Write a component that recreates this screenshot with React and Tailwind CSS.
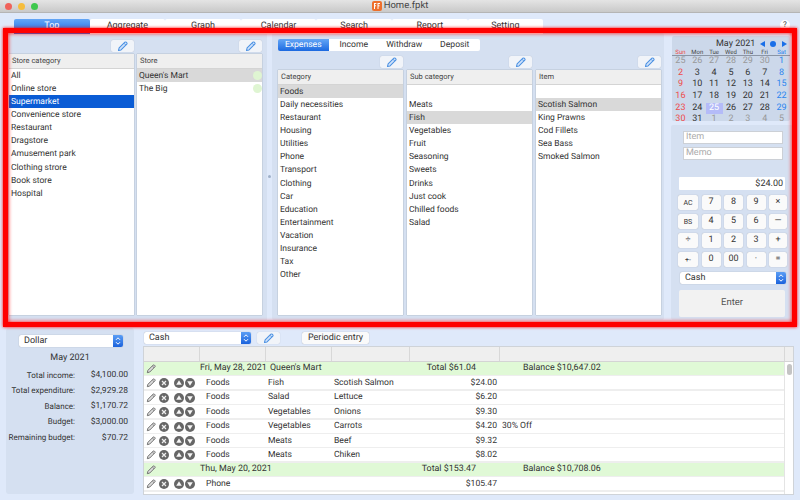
import React from "react";

const FONT = { fontFamily: 'Roboto, "Liberation Sans", Arial, sans-serif' };

const tabs = ["Top", "Aggregate", "Graph", "Calendar", "Search", "Report", "Setting"];
const storeCats = ["All", "Online store", "Supermarket", "Convenience store", "Restaurant", "Dragstore", "Amusement park", "Clothing strore", "Book store", "Hospital"];
const categories = ["Foods", "Daily necessities", "Restaurant", "Housing", "Utilities", "Phone", "Transport", "Clothing", "Car", "Education", "Entertainment", "Vacation", "Insurance", "Tax", "Other"];
const subCats = ["", "Meats", "Fish", "Vegetables", "Fruit", "Seasoning", "Sweets", "Drinks", "Just cook", "Chilled foods", "Salad"];
const items = ["", "Scotish Salmon", "King Prawns", "Cod Fillets", "Sea Bass", "Smoked Salmon"];

const calDays = [
  [25, 26, 27, 28, 29, 30, 1],
  [2, 3, 4, 5, 6, 7, 8],
  [9, 10, 11, 12, 13, 14, 15],
  [16, 17, 18, 19, 20, 21, 22],
  [23, 24, 25, 26, 27, 28, 29],
  [30, 31, 1, 2, 3, 4, 5],
];

const keys = [
  ["AC", "7", "8", "9", "×"],
  ["BS", "4", "5", "6", "—"],
  ["÷", "1", "2", "3", "+"],
  ["+-", "0", "00", "·", "="],
];

const summary = [
  ["Total income:", "$4,100.00"],
  ["Total expenditure:", "$2,929.28"],
  ["Balance:", "$1,170.72"],
  ["Budget:", "$3,000.00"],
  ["Remaining budget:", "$70.72"],
];

const entries = [
  { group: true, date: "Fri, May 28, 2021", store: "Queen's Mart", total: "Total $61.04", balance: "Balance $10,647.02" },
  { cat: "Foods", sub: "Fish", item: "Scotish Salmon", price: "$24.00" },
  { cat: "Foods", sub: "Salad", item: "Lettuce", price: "$6.20" },
  { cat: "Foods", sub: "Vegetables", item: "Onions", price: "$9.30" },
  { cat: "Foods", sub: "Vegetables", item: "Carrots", price: "$4.20", memo: "30% Off" },
  { cat: "Foods", sub: "Meats", item: "Beef", price: "$9.32" },
  { cat: "Foods", sub: "Meats", item: "Chiken", price: "$8.02" },
  { group: true, date: "Thu, May 20, 2021", store: "", total: "Total $153.47", balance: "Balance $10,708.06" },
  { cat: "Phone", sub: "", item: "", price: "$105.47" },
  { cat: "", sub: "", item: "", price: "" },
];

function PencilIcon({ color = "#4a90e2", fill = "#cfe2fb", size = 11 }) {
  return (
    <svg width={size} height={size} viewBox="0 0 12 12">
      <path d="M1.6 10.4 L2.3 7.6 L8.6 1.3 Q9.3 0.7 10 1.3 L10.7 2 Q11.3 2.7 10.7 3.4 L4.4 9.7 Z" fill={fill} stroke={color} strokeWidth="1.1" strokeLinejoin="round" />
      <path d="M7.6 2.4 L9.6 4.4" stroke={color} strokeWidth="0.9" />
    </svg>
  );
}

function PencilButton() {
  return (
    <div className="w-[23px] h-[12px] bg-[#f1f4f9] rounded-[2px] flex items-center justify-center shadow-[0_0_1px_rgba(0,0,0,0.2)]">
      <PencilIcon />
    </div>
  );
}

function RemoveIcon() {
  return (
    <svg width="10" height="10" viewBox="0 0 10 10">
      <circle cx="5" cy="5" r="5" fill="#666" />
      <path d="M3 3 L7 7 M7 3 L3 7" stroke="#eee" strokeWidth="1.2" />
    </svg>
  );
}

function MoveIcon({ down }) {
  return (
    <svg width="10" height="10" viewBox="0 0 10 10">
      <circle cx="5" cy="5" r="5" fill="#666" />
      <path d={down ? "M2.2 3.2 H7.8 L5 7.8 Z" : "M5 2.2 L7.8 6.8 H2.2 Z"} fill="#f6f6f6" />
    </svg>
  );
}

function Select({ label, className }) {
  return (
    <div className={"h-[12px] bg-white rounded-[2px] flex items-center justify-between pl-[5px] shadow-[0_0_1px_rgba(0,0,0,0.35)] text-[9px] text-[#333] " + className}>
      <span className="pt-[1px]">{label}</span>
      <div className="w-[10px] h-full rounded-r-[2px] bg-gradient-to-b from-[#5a9df5] to-[#1a62dc] flex items-center justify-center">
        <svg width="6" height="10" viewBox="0 0 6 10">
          <path d="M1 3.8 L3 1.8 L5 3.8 M1 6.2 L3 8.2 L5 6.2" fill="none" stroke="#fff" strokeWidth="1" />
        </svg>
      </div>
    </div>
  );
}

function ListColumn({ title, rows, selected, activeRow, dots, className }) {
  return (
    <div className={"w-[125px] bg-white flex flex-col overflow-hidden shadow-[0_0_1px_rgba(0,0,0,0.4)] " + className}>
      <div className="h-[15px] shrink-0 bg-[#efefef] border-b border-[#d4d4d4] px-[3px] flex items-center text-[7.5px] text-[#444]">
        {title}
      </div>
      {rows.map((row, index) => (
        <div
          key={index}
          className={
            "h-[13.14px] shrink-0 pl-[2px] flex items-center justify-between text-[8.5px] " +
            (index === activeRow ? "bg-[#0a5cd5] text-white" : index === selected ? "bg-[#d9d9d9] text-[#333]" : "text-[#333]")
          }
        >
          <span className="pt-[1px]">{row}</span>
          {dots && <span className="w-[9px] h-[9px] rounded-full bg-[#dff5d2]" />}
        </div>
      ))}
    </div>
  );
}

function EntryRow({ row }) {
  if (row.group) {
    return (
      <div className="h-[13px] mb-[1.4px] pt-[1px] bg-[#e0f9d6] flex items-center text-[8.9px] text-[#333] shrink-0">
        <div className="w-[56px] pl-[2px]"><PencilIcon color="#666" fill="#ddd" size={10} /></div>
        <div className="w-[70px] whitespace-nowrap">{row.date}</div>
        <div className="w-[133px] whitespace-nowrap">{row.store}</div>
        <div className="w-[73px] text-right whitespace-nowrap">{row.total}</div>
        <div className="ml-[47px] whitespace-nowrap">{row.balance}</div>
      </div>
    );
  }
  return (
    <div className="h-[13px] mb-[1.4px] pt-[1px] bg-white flex items-center text-[8.6px] text-[#333] shrink-0">
      <div className="w-[62px] pl-[2px] flex items-center">
        <PencilIcon color="#666" fill="#ddd" size={10} />
        <span className="ml-[3px]"><RemoveIcon /></span>
        <span className="ml-[5px]"><MoveIcon /></span>
        <span className="ml-[1px]"><MoveIcon down /></span>
      </div>
      <div className="w-[62px]">{row.cat}</div>
      <div className="w-[66px]">{row.sub}</div>
      <div className="w-[72px]">{row.item}</div>
      <div className="w-[91px] text-right">{row.price}</div>
      <div className="ml-[5px]">{row.memo}</div>
    </div>
  );
}

export default function App() {
  return (
    <div className="relative w-[800px] h-[500px] overflow-hidden bg-[#dfe9fa] flex flex-col [text-rendering:geometricPrecision]" style={FONT}>
      {/* title bar */}
      <div className="h-[13px] shrink-0 bg-gradient-to-b from-[#e4e4e4] to-[#c9c9c9] border-b border-[#b5b5b5] relative flex items-center justify-center text-[9.5px] text-[#444]">
        <div className="absolute left-[5px] top-[3px] flex gap-[6px]">
          <span className="w-[7px] h-[7px] rounded-full bg-[#f0625a]" />
          <span className="w-[7px] h-[7px] rounded-full bg-[#f6bd3c]" />
          <span className="w-[7px] h-[7px] rounded-full bg-[#3fc84e]" />
        </div>
        <div className="flex items-center gap-[2px]">
          <svg width="10" height="10" viewBox="0 0 10 10">
            <rect width="10" height="10" rx="2" fill="#ee6f2c" />
            <path d="M2.5 2 V8 M2.5 2.5 H4.3 M2.5 4.8 H4 M6 2 V8 M6 2.5 H8 M6 4.8 H7.6" stroke="#fff" strokeWidth="1" fill="none" />
          </svg>
          <span>Home.fpkt</span>
        </div>
      </div>

      {/* tabs */}
      <div className="h-[20px] shrink-0 pl-[14px] pt-[6px] flex relative">
        {tabs.map((tab, index) => (
          <div
            key={tab}
            className={
              "w-[75.6px] h-[15px] rounded-t-[2px] flex items-center justify-center text-[9px] " +
              (index === 0 ? "bg-gradient-to-b from-[#63a6f6] to-[#1b69e0] text-white" : "bg-white text-[#333]")
            }
          >
            {tab}
          </div>
        ))}
        <div className="absolute left-[780px] top-[7px] w-[10px] h-[10px] rounded-full bg-white flex items-center justify-center text-[8px] text-[#333]">?</div>
      </div>

      {/* upper work area */}
      <div className="h-[291px] shrink-0 pl-[6px] flex">
        <div className="w-[261px] bg-[#d5e0f1] pl-[3px] pt-[7px] h-[287px] flex flex-col">
          <div className="flex gap-[3px] h-[12px]">
            <div className="w-[125px] flex justify-end"><PencilButton /></div>
            <div className="w-[125px] flex justify-end"><PencilButton /></div>
          </div>
          <div className="flex gap-[3px] mt-[2px]">
            <ListColumn title="Store category" rows={storeCats} activeRow={2} className="h-[261px]" />
            <ListColumn title="Store" rows={["Queen's Mart", "The Big"]} selected={0} dots className="h-[261px]" />
          </div>
        </div>

        <div className="w-[5px] flex items-center justify-center h-[287px]">
          <span className="w-[3px] h-[3px] rounded-full bg-[#9fb0c8]" />
        </div>

        <div className="w-[392px] h-[287px] bg-[#d5e0f1] rounded-[2px] pl-[6px] pt-[6px] flex flex-col">
          <div className="flex h-[12px] text-[8.6px]">
            {["Expenses", "Income", "Withdraw", "Deposit"].map((seg, index) => (
              <div
                key={seg}
                className={
                  "w-[50.5px] pt-[1px] flex items-center justify-center " +
                  (index === 0 ? "rounded-l-[2px] bg-gradient-to-b from-[#63a6f6] to-[#1b69e0] text-white" : "bg-white text-[#333]") +
                  (index === 3 ? " rounded-r-[2px]" : "")
                }
              >
                {seg}
              </div>
            ))}
          </div>
          <div className="flex gap-[4px] mt-[5px] h-[12px]">
            <div className="w-[125px] flex justify-end"><PencilButton /></div>
            <div className="w-[125px] flex justify-end"><PencilButton /></div>
            <div className="w-[125px] flex justify-end"><PencilButton /></div>
          </div>
          <div className="flex gap-[4px] mt-[2px]">
            <ListColumn title="Category" rows={categories} selected={0} className="h-[245px]" />
            <ListColumn title="Sub category" rows={subCats} selected={2} className="h-[245px]" />
            <ListColumn title="Item" rows={items} selected={1} className="h-[245px]" />
          </div>
        </div>

        <div className="w-[6px]" />

        <div className="w-[122px] h-[287px] flex flex-col">
          <div className="ml-[2px] w-[118px] h-[85px] mt-[3px] bg-[#ccd8ea] rounded-[2px] flex flex-col">
            <div className="h-[9px] flex items-center relative text-[9px] text-[#333] mt-[4px]">
              <span className="ml-[44px]">May 2021</span>
              <div className="absolute left-[88px] top-[1px] flex items-center gap-[5px]">
                <span className="w-0 h-0 border-y-[3px] border-y-transparent border-r-[5px] border-r-[#1a6fe8]" />
                <span className="w-[6px] h-[6px] rounded-full bg-[#1a6fe8]" />
                <span className="w-0 h-0 border-y-[3px] border-y-transparent border-l-[5px] border-l-[#1a6fe8] ml-[1px]" />
              </div>
            </div>
            <div className="grid grid-cols-7 h-[7px] border-b border-[#8b95a5] text-[6px] text-center text-[#444] leading-[7px]">
              {["Sun", "Mon", "Tue", "Wed", "Thu", "Fri", "Sat"].map((day, index) => (
                <span key={day} className={index === 0 ? "text-[#ee4b4b]" : index === 6 ? "text-[#2e86ee]" : ""}>{day}</span>
              ))}
            </div>
            <div className="grid grid-cols-7 auto-rows-[11.65px] text-[9px] text-center leading-[11.65px]">
              {calDays.map((week, w) =>
                week.map((day, d) => {
                  const muted = (w === 0 && d < 6) || (w === 5 && d > 1);
                  const today = w === 4 && d === 2;
                  let color = "text-[#333]";
                  if (muted) color = "text-[#999]";
                  else if (d === 0) color = "text-[#ee4b4b]";
                  else if (d === 6) color = "text-[#2e86ee]";
                  if (today) color = "bg-[#b4bbf8] text-white";
                  return <span key={w + "-" + d} className={color}>{day}</span>;
                })
              )}
            </div>
          </div>

          <div className="mt-[4px] mr-[-1px] ml-[1px] h-[195px] bg-[#d5e0f1] rounded-[2px] flex flex-col pt-[6px]">
            <div className="ml-[12px] w-[100px] h-[13px] pt-[1px] bg-white border border-[#ccd0d6] flex items-center pl-[2px] text-[9px] text-[#aaa]">Item</div>
            <div className="ml-[12px] w-[100px] h-[13px] mt-[3px] bg-white border border-[#ccd0d6] flex items-center pl-[2px] text-[9px] text-[#aaa]">Memo</div>
            <div className="ml-[8px] w-[106px] h-[13px] mt-[17px] pt-[2px] bg-white rounded-[1px] flex items-center justify-end pr-[2px] text-[9px] text-[#333]">$24.00</div>
            <div className="ml-[7px] mt-[5px] w-[109px] grid grid-cols-[20px_19px_19px_19px_18px] gap-x-[3.5px] gap-y-[4px] auto-rows-[15px]">
              {keys.flat().map((key, index) => (
                <div
                  key={index}
                  className={
                    "bg-[#fafafa] rounded-[2px] pt-[1px] flex items-center justify-center text-[#333] shadow-[0_0_1px_rgba(0,0,0,0.3)] " +
                    (key === "AC" || key === "BS" || key === "+-" ? "text-[7px]" : "text-[9px]")
                  }
                >
                  {key}
                </div>
              ))}
            </div>
            <Select label="Cash" className="ml-[9px] mt-[5px] w-[106px] shrink-0" />
            <div className="ml-[8px] mt-[6px] w-[106px] h-[27px] bg-[#f2f2f2] rounded-[2px] flex items-center justify-center text-[9.5px] text-[#555]">Enter</div>
          </div>
        </div>
      </div>

      {/* lower area */}
      <div className="flex-1 pl-[6px] pt-[4px] flex min-h-0">
        <div className="w-[128px] h-[166px] bg-[#d5e0f1] rounded-[3px] flex flex-col">
          <Select label="Dollar" className="ml-[13px] mt-[7px] w-[104px] shrink-0" />
          <div className="mt-[6px] text-center text-[9px] text-[#333] h-[11px] leading-[11px]">May 2021</div>
          <div className="mt-[6px] flex flex-col gap-[4.6px] text-[8.5px] text-[#333]">
            {summary.map(([label, value]) => (
              <div key={label} className="flex h-[11px] items-center whitespace-nowrap">
                <div className="w-[69px] text-right text-[8px]">{label}</div>
                <div className="w-[53px] text-right">{value}</div>
              </div>
            ))}
          </div>
        </div>

        <div className="ml-[9px] w-[651px] flex flex-col">
          <div className="flex items-center h-[14px] mt-[3px]">
            <Select label="Cash" className="ml-[1px] w-[107px]" />
            <div className="ml-[6px]"><PencilButton /></div>
            <div className="ml-[22px] w-[67px] h-[12px] pt-[1px] bg-[#fafafa] rounded-[2px] flex items-center justify-center text-[9px] text-[#333] shadow-[0_0_1px_rgba(0,0,0,0.35)]">
              Periodic entry
            </div>
          </div>
          <div className="mt-[1px] h-[149px] border border-[#cfd3d8] bg-[#eeeeee] flex flex-col overflow-hidden">
            <div className="h-[15px] shrink-0 flex border-b border-[#d4d4d4] bg-[#efefef]">
              <div className="w-[56px] border-r border-[#d8d8d8]" />
              <div className="w-[66px] border-r border-[#d8d8d8]" />
              <div className="w-[66px] border-r border-[#d8d8d8]" />
              <div className="w-[78px] border-r border-[#d8d8d8]" />
              <div className="w-[90px] border-r border-[#d8d8d8]" />
              <div className="w-[285px] border-r border-[#d8d8d8]" />
            </div>
            <div className="flex flex-1 min-h-0">
              <div className="w-[641px] flex flex-col overflow-hidden">
                {entries.map((row, index) => (
                  <EntryRow key={index} row={row} />
                ))}
              </div>
              <div className="w-[9px] bg-white border-l border-[#e4e4e4] pt-[2px] pl-[1.5px]">
                <div className="w-[5px] h-[11px] rounded-full bg-[#c4c4c4]" />
              </div>
            </div>
          </div>
        </div>
      </div>

      {/* red highlight frame from the reference */}
      <div className="absolute left-[3px] top-[28px] w-[794px] h-[299px] border-[5px] border-[#ff0000] shadow-[0_0_3px_#ff0000,inset_0_0_4px_#ff0000] pointer-events-none" />
    </div>
  );
}
